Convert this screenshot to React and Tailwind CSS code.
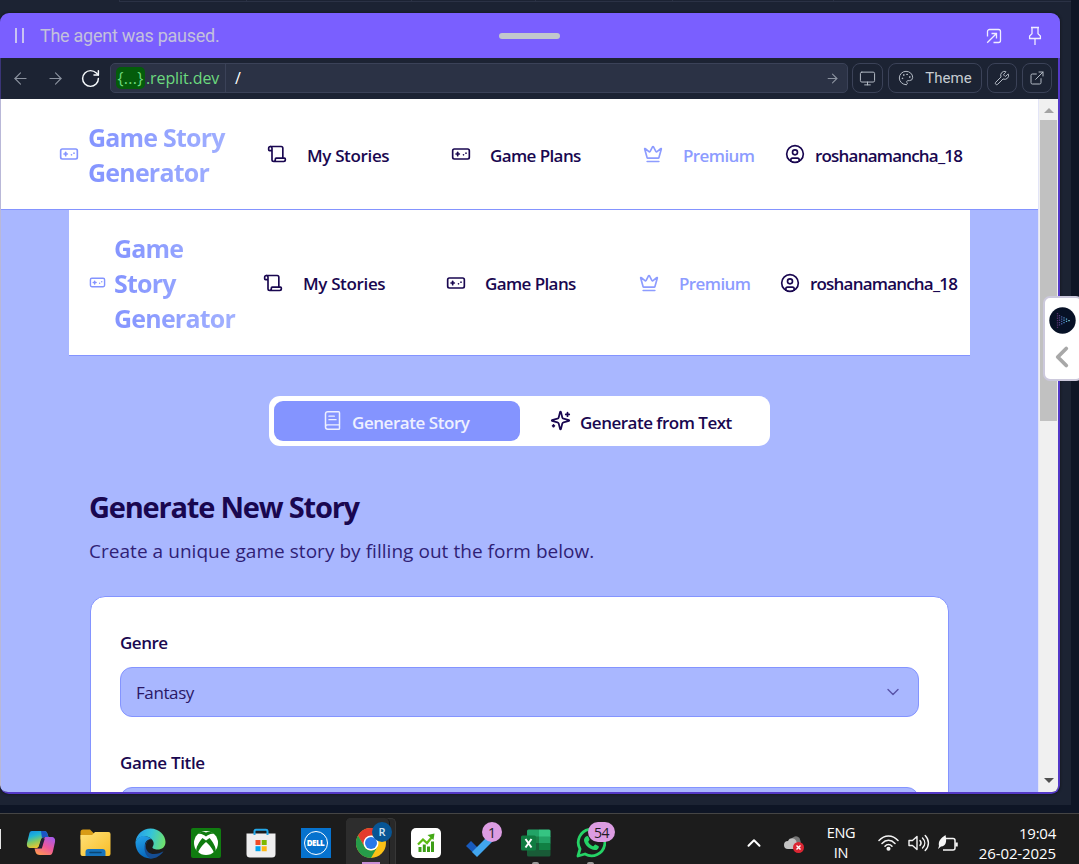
import React from "react";
import {
  ArrowLeft, ArrowRight, RotateCw, Monitor, Palette, Wrench, ExternalLink,
  Scroll, Gamepad, Crown, CircleUser, BookText, ChevronDown, ChevronUp, ChevronLeft,
} from "lucide-react";

function AgentBar() {
  return (
    <div className="flex h-[45px] shrink-0 items-center bg-[#7a5fff] font-['Roboto',sans-serif]">
      <div className="ml-[15px] flex w-[25px] gap-[5px]">
        <span className="h-[15px] w-[2px] bg-[#c9c3f2]" />
        <span className="h-[15px] w-[2px] bg-[#c9c3f2]" />
      </div>
      <span className="w-[459px] whitespace-nowrap text-[18px] tracking-[-0.27px] text-[#c3c1dc]">The agent was paused.</span>
      <span className="h-[6px] w-[61px] rounded-full bg-[#c2c8cc]" />
      <svg className="ml-[426px]" width="16" height="16" viewBox="0 0 16 16" fill="none" stroke="#f0edff" strokeWidth="1.3">
        <path d="M1.5 8.5v-5a2 2 0 0 1 2-2h9a2 2 0 0 1 2 2v9a2 2 0 0 1-2 2h-5" />
        <path d="M1.2 14.8 10.5 5.5M5.5 5.5h5v5" />
      </svg>
      <svg className="ml-[26px]" width="14" height="20" viewBox="0 0 14 20" fill="none" stroke="#f0edff" strokeWidth="1.300">
        <path d="M3 1.500h8M4 1.500v6.300L1.600 10v2.500h10.800V10L10 7.800V1.500M7 12.500V19" />
      </svg>
    </div>
  );
}

function ToolButton({ className, children }) {
  return (
    <div className={`flex h-[30px] items-center justify-center rounded-[8px] border border-[#3b4258] text-[#b4bbc5] ${className}`}>
      {children}
    </div>
  );
}

function AddressBar() {
  return (
    <div className="flex h-[41px] shrink-0 items-center border-l border-[#3a3477] bg-[#1c2333] pb-px">
      <ArrowLeft className="ml-[10px] shrink-0" size={19} strokeWidth={1.4} color="#8b929f" />
      <ArrowRight className="ml-[16px] shrink-0" size={19} strokeWidth={1.4} color="#8b929f" />
      <RotateCw className="ml-[15px] shrink-0" size={21} strokeWidth={1.7} color="#f5f9fc" />
      <div className="ml-[9px] flex h-[30px] w-[738px] shrink-0 items-center rounded-[5px] border border-[#3b4258] bg-[#2b3245] font-['Open_Sans',sans-serif] text-[16px]">
        <div className="flex h-full w-[115px] items-center border-r border-[#3b4258] pl-[5px] text-[#6cd97e]">
          <span className="flex h-[22px] w-[29px] items-center justify-center rounded-[5px] bg-[#045c0b] tracking-[0.3px]">{"{...}"}</span>
          <span className="ml-px whitespace-nowrap tracking-[-0.1px]">.replit.dev</span>
        </div>
        <span className="ml-[9px] text-white">/</span>
        <ArrowRight className="ml-auto mr-[7px]" size={15} strokeWidth={1.7} color="#8b929f" />
      </div>
      <ToolButton className="ml-[4px] w-[31px] shrink-0"><Monitor size={17} strokeWidth={1.4} /></ToolButton>
      <ToolButton className="ml-[5px] w-[94px] shrink-0 gap-[11px]">
        <Palette size={16} strokeWidth={1.5} />
        <span className="font-['Roboto',sans-serif] text-[15px] tracking-[0.05px] text-[#c6ccd2]">Theme</span>
      </ToolButton>
      <ToolButton className="ml-[5px] w-[30px] shrink-0"><Wrench size={16} strokeWidth={1.5} /></ToolButton>
      <ToolButton className="ml-[5px] w-[30px] shrink-0"><ExternalLink size={16} strokeWidth={1.5} /></ToolButton>
    </div>
  );
}

function NavItem({ icon: Icon, label, className, textClass }) {
  return (
    <div className={`flex shrink-0 items-center ${className}`}>
      <Icon className="mb-[3px] shrink-0" size={20} strokeWidth={2} />
      <span className={`whitespace-nowrap text-[17px] font-semibold ${textClass}`}>{label}</span>
    </div>
  );
}

function NavItems({ plans = "w-[192px]", premium = "w-[142px]", stories = "w-[184px]" }) {
  return (
    <>
      <NavItem icon={Scroll} label="My Stories" className={stories} textClass="ml-[20px] tracking-[-0.35px]" />
      <NavItem icon={Gamepad} label="Game Plans" className={plans} textClass="ml-[19px] tracking-[-0.6px]" />
      <NavItem icon={Crown} label="Premium" className={`text-[#8d9cff] ${premium}`} textClass="ml-[20px] tracking-[-0.6px]" />
      <NavItem icon={CircleUser} label="roshanamancha_18" className="" textClass="ml-[10px] tracking-[-0.8px]" />
    </>
  );
}

function SparklesIcon() {
  return (
    <svg className="mb-[2px]" width="21" height="21" viewBox="0 0 24 24" fill="none" stroke="currentColor" strokeWidth="2" strokeLinecap="round" strokeLinejoin="round">
      <path d="M9.937 15.500A2 2 0 0 0 8.500 14.063l-6.135-1.582a.5.5 0 0 1 0-.962L8.500 9.936A2 2 0 0 0 9.937 8.500l1.582-6.135a.5.5 0 0 1 .963 0L14.063 8.500A2 2 0 0 0 15.500 9.937l6.135 1.581a.5.5 0 0 1 0 .964L15.500 14.063a2 2 0 0 0-1.437 1.437l-1.582 6.135a.5.5 0 0 1-.963 0z" />
      <path d="M20 3v4M22 5h-4M4 17v2M5 18H3" />
    </svg>
  );
}

const brandText = "bg-gradient-to-r from-[#8494ff] to-[#a9b7ff] bg-clip-text text-[25px] font-bold leading-[35px] text-transparent tracking-[-0.8px] whitespace-nowrap";

function StoryPage() {
  return (
    <div className="flex min-w-0 flex-1 flex-col overflow-hidden bg-[#a9b7ff] font-['Open_Sans',sans-serif] text-[#190750]">
      <nav className="flex h-[111px] shrink-0 items-center border-b border-[#8494ff] bg-white pl-[58px]">
        <Gamepad className="mb-px shrink-0" size={20} color="#8494ff" />
        <div className={`ml-[9px] mt-[2px] w-[179px] ${brandText}`}>Game Story<br />Generator</div>
        <div className="mt-[3px] flex"><NavItems /></div>
      </nav>
      <div className="ml-[68px] w-[901px] shrink-0">
        <nav className="flex h-[146px] items-center border-b border-[#8494ff] bg-white pl-[20px]">
          <Gamepad className="shrink-0" size={17} color="#8494ff" />
          <div className={`ml-[8px] mt-[2px] w-[149px] ${brandText}`}>Game<br />Story<br />Generator</div>
          <div className="mt-[3px] flex"><NavItems stories="w-[183px]" plans="w-[193px]" premium="w-[141px]" /></div>
        </nav>
        <div className="ml-[200px] mt-[40px] flex h-[50px] w-[501px] rounded-[11px] bg-white p-[5px] text-[17px] font-semibold">
          <div className="flex w-[246px] items-center rounded-[9px] bg-[#8494ff] pl-[48px] text-[#eef0ff]">
            <BookText className="mb-px" size={21} strokeWidth={1.7} />
            <span className="ml-[9px] mt-[3px] whitespace-nowrap tracking-[-0.45px]">Generate Story</span>
          </div>
          <div className="flex items-center pl-[30px]">
            <SparklesIcon />
            <span className="ml-[9px] mt-[3px] whitespace-nowrap tracking-[-0.5px]">Generate from Text</span>
          </div>
        </div>
        <h1 className="ml-[20px] mt-[42px] whitespace-nowrap text-[29px] font-bold leading-[38px] tracking-[-1.200px]">Generate New Story</h1>
        <p className="ml-[20px] mt-[11px] whitespace-nowrap text-[19px] leading-[28px] tracking-[0.04px] text-[#301f76]">Create a unique game story by filling out the form below.</p>
        <div className="ml-[21px] mt-[31px] h-[400px] w-[859px] rounded-[15px] border border-[#8494ff] bg-white px-[29px] pt-[34px]">
          <div className="text-[17px] font-semibold leading-[24px] tracking-[-0.5px]">Genre</div>
          <div className="mt-[12px] flex h-[50px] items-center justify-between rounded-[12px] border border-[#8494ff] bg-[#a9b7ff] pl-[15px] pr-[15px]">
            <span className="mt-[2px] text-[17px] tracking-[-0.4px] text-[#2a1766]">Fantasy</span>
            <ChevronDown size={20} strokeWidth={1.7} color="#5a54a9" />
          </div>
          <div className="mt-[34px] text-[17px] font-semibold leading-[24px] tracking-[-0.35px]">Game Title</div>
          <div className="mt-[12px] h-[50px] rounded-[12px] border border-[#8494ff] bg-[#a9b7ff]" />
        </div>
      </div>
    </div>
  );
}

function Scrollbar() {
  return (
    <div className="flex w-[20px] shrink-0 flex-col items-center border-l border-[#e3e5f7] bg-[#f0f0f0]">
      <svg className="mt-[9px]" width="10" height="5" viewBox="0 0 10 5"><path d="M0 5 5 0l5 5z" fill="#a3a3a3" /></svg>
      <div className="mt-[7px] h-[301px] w-[17px] bg-[#c1c1c1]" />
      <svg className="mb-[9px] mt-auto" width="10" height="5" viewBox="0 0 10 5"><path d="M0 0h10L5 5z" fill="#505050" /></svg>
    </div>
  );
}

function SideTab() {
  return (
    <div className="absolute left-[1043px] top-[296px] flex h-[85px] w-[40px] flex-col items-start rounded-[7px] border-2 border-[#ccc9dc] bg-white pl-[4px] pt-[9px]">
      <svg width="27" height="27" viewBox="0 0 27 27">
        <circle cx="13.500" cy="13.500" r="13.200" fill="#071126" />
        <g strokeWidth="1.300" strokeDasharray="1.300 1" fill="none">
          <path d="M8.500 6v15" stroke="#57306b" />
          <path d="M10.500 8v11" stroke="#514085" />
          <path d="M12.700 9.200v9" stroke="#4b62a5" />
          <path d="M15 10.300v6.700" stroke="#4e8bc5" />
          <path d="M17.500 11.500v4.500" stroke="#61b8df" />
          <path d="M20 13v2" stroke="#92edf6" />
        </g>
      </svg>
      <ChevronLeft className="-ml-[4px] mt-[6px]" size={34} strokeWidth={2.700} color="#a8a8a8" />
    </div>
  );
}

function Cell({ children }) {
  return <div className="relative flex h-full w-[55px] shrink-0 items-center justify-center pt-[8px]">{children}</div>;
}

function CopilotIcon() {
  return (
    <svg width="30" height="28" viewBox="0 0 30 28">
      <defs>
        <linearGradient id="cpA" x1="0" y1="0" x2="0.400" y2="1"><stop stopColor="#1388e8" /><stop offset=".35" stopColor="#20b6d5" /><stop offset=".65" stopColor="#83ca63" /><stop offset="1" stopColor="#f2c62d" /></linearGradient>
        <linearGradient id="cpB" x1=".8" y1="0" x2=".2" y2="1"><stop stopColor="#a85be8" /><stop offset=".5" stopColor="#ed589b" /><stop offset="1" stopColor="#ff994f" /></linearGradient>
      </defs>
      <path d="M6 2h12c2 0 3 1 3.500 3l1 3h-3c-3 0-4 1-5 4l-1.500 5c-.6 1.500-1.500 2-3 2H5c-3.500 0-4.500-2-4-5L3 6c.5-2.500 1-4 3-4z" fill="url(#cpA)" />
      <path d="M24 26H14c-2.500 0-4-1-4.500-3l-1-3.500h3c2.500 0 3.500-1 4.300-4l1.500-5c.6-2 1.700-2.500 3.200-2.500H25c3.500 0 4.500 2 4 5l-2 9c-.6 2.500-1.500 4-3 4z" fill="url(#cpB)" />
      <path d="M15 2h3c2 0 3 1 3.500 3l1 3h-3c-1.500 0-2.500.5-3.500 1.500z" fill="#1a55c5" />
      <path d="M15.800 9.500h3l-3 10h-3.500z" fill="#242036" />
    </svg>
  );
}

function FolderIcon() {
  return (
    <svg width="31" height="28" viewBox="0 0 31 28">
      <defs><linearGradient id="fd" x2="1" y2="1"><stop stopColor="#ffe178" /><stop offset="1" stopColor="#f8bd27" /></linearGradient></defs>
      <path d="M.5 3A2.500 2.500 0 0 1 3 .5h7l4 4H28v6H.5z" fill="#d99c16" />
      <path d="M.5 6H12l3-3h13.500a2 2 0 0 1 2 2v20a2 2 0 0 1-2 2h-26a2 2 0 0 1-2-2z" fill="url(#fd)" />
      <path d="M5.500 27v-4a3 3 0 0 1 3-3h14a3 3 0 0 1 3 3v4z" fill="#1673bd" />
      <path d="M10 23.500h11" stroke="#0a4675" strokeWidth="1.500" strokeLinecap="round" />
    </svg>
  );
}

function EdgeIcon() {
  return (
    <svg width="31" height="31" viewBox="0 0 31 31">
      <defs>
        <linearGradient id="eg" x1="0" y1=".3" x2="1" y2=".5"><stop stopColor="#249bea" /><stop offset=".5" stopColor="#35c5d8" /><stop offset="1" stopColor="#6ee06d" /></linearGradient>
        <linearGradient id="eb" x2=".3" y2="1"><stop stopColor="#24a5eb" /><stop offset="1" stopColor="#0869bd" /></linearGradient>
      </defs>
      <path d="M.5 14C1.500 6 8 .5 15.500 .5 24 .5 30.500 7 30.500 14c0 5-3.500 7.500-8 7.500-3 0-5.500-1-5-2.500 1.500-2 1.800-5-.5-7.500C12 6 3 8 .5 14z" fill="url(#eg)" />
      <path d="M.5 14C4 6.500 12 6.500 17 11.500c-4-1-8 2.500-7 8 .8 5 4 9 9 10.500C9 32.500 0 25 .5 14z" fill="url(#eb)" />
      <path d="M14 12c-5 3-4.500 14 5 14 4 0 7-1.200 9.500-2.700C25.500 28 21 30.500 16 30.500 9 28.500 7 16 14 12z" fill="#154d92" />
    </svg>
  );
}

function XboxIcon() {
  return (
    <svg width="30" height="30" viewBox="0 0 30 30">
      <rect width="30" height="30" rx="2" fill="#107c10" />
      <circle cx="15" cy="15" r="12" fill="#fff" />
      <path d="M7 6c3-1 6 1 8 2.500 2-1.500 5-3.500 8-2.500-2-2-5-3-8-1.500C12 3 9 4 7 6z" fill="#107c10" />
      <path d="M11.500 10C8 14 4.500 20 5.500 23L7 25c1-4 5-8.500 8-11 3 2.500 7 7 8 11l1.500-2c1-3-2.500-9-6-13L15 12.500z" fill="#107c10" />
    </svg>
  );
}

function StoreIcon() {
  return (
    <svg width="30" height="30" viewBox="0 0 30 30">
      <path d="M.5 5.500h29V26a3.500 3.500 0 0 1-3.500 3.500H4A3.500 3.500 0 0 1 .5 26z" fill="#eeeeef" />
      <path d="M8.500 7V3A1.500 1.500 0 0 1 10 1.700h10A1.500 1.500 0 0 1 21.500 3v4" fill="none" stroke="#24a7e8" strokeWidth="2" />
      <path d="M9.500 12h5v5h-5z" fill="#f04b25" /><path d="M15.700 12h5v5h-5z" fill="#7db900" />
      <path d="M9.500 18.200h5v5h-5z" fill="#00a3ee" /><path d="M15.700 18.200h5v5h-5z" fill="#fdb813" />
    </svg>
  );
}

function ChromeIcon() {
  return (
    <svg width="30" height="30" viewBox="0 0 30 30">
      <circle cx="15" cy="15" r="15" fill="#fbc116" />
      <path d="M2 7.500A15 15 0 0 1 28 7.500H15L8.500 19z" fill="#e33b2e" />
      <path d="M2 7.500 8.500 18.700a7.500 7.500 0 0 0 13 0L15 30A15 15 0 0 1 2 7.500z" fill="#269b49" />
      <circle cx="15" cy="15" r="7.500" fill="#fff" /><circle cx="15" cy="15" r="6" fill="#2878e8" />
    </svg>
  );
}

function ChartIcon() {
  return (
    <svg width="30" height="30" viewBox="0 0 30 30">
      <rect width="30" height="30" rx="5" fill="#fff" />
      <path d="M7.500 19h3v5h-3zM11.800 16.500h3V24h-3zM16 18.500h3V24h-3zM20 13.500h3V24h-3z" fill="#3c9e16" />
      <path d="m7 16.500 5-5 4 3.500 5-6" fill="none" stroke="#5bbb12" strokeWidth="2.300" />
      <path d="M16.500 7 23.500 5.500 22.500 12z" fill="#43a817" />
    </svg>
  );
}

function ExcelIcon() {
  return (
    <svg width="30" height="28" viewBox="0 0 30 28">
      <path d="M6 2A1.500 1.500 0 0 1 7.500 .5H18V8H6z" fill="#22a366" /><path d="M18 .5h10A1.500 1.500 0 0 1 29.500 2v6H18z" fill="#35c482" />
      <path d="M6 7.500h12v7H6z" fill="#1b7f48" /><path d="M18 7.500h11.500v7H18z" fill="#22a366" />
      <path d="M6 14h12v7H6z" fill="#185c37" /><path d="M18 14h11.500v7H18z" fill="#108043" />
      <path d="M6 21h23.500v5a1.500 1.500 0 0 1-1.500 1.500H7.500A1.500 1.500 0 0 1 6 26z" fill="#195b37" />
      <rect y="6.500" width="15" height="15" rx="1.500" fill="#107c41" />
      <path d="m4.500 10 6 8.500M10.500 10l-6 8.500" stroke="#fff" strokeWidth="2" />
    </svg>
  );
}

function WhatsAppIcon() {
  return (
    <svg width="30" height="30" viewBox="0 0 30 30" fill="none">
      <path d="M2 28 4 21A13.300 13.300 0 1 1 9 26z" stroke="#25d366" strokeWidth="2.800" strokeLinejoin="round" />
      <path d="M10 8.500c1-1 2-.7 2.500.5l1 2.500c.2.800-1.500 2-1.200 2.500 1 2 2.700 3.500 4.700 4.300.8.200 1.800-2 2.500-1.700l2.800 1.400c1 .6.600 1.900-.4 2.900-1.500 1.500-4 1.600-6.900.1-3.500-1.800-6.500-5-7-8.500-.1-1.800.8-3 2-4z" fill="#25d366" />
    </svg>
  );
}

function Taskbar() {
  return (
    <div className="flex h-[51px] w-[1079px] shrink-0 border-t border-[#454545] bg-[#1c1c1c] font-['Open_Sans',sans-serif] text-white">
      <div className="mt-[15px] h-[20px] w-px bg-[#e5e5e5]" />
      <div className="ml-[12px] flex h-full">
        <Cell><CopilotIcon /></Cell>
        <Cell><FolderIcon /></Cell>
        <Cell><EdgeIcon /></Cell>
        <Cell><XboxIcon /></Cell>
        <Cell><StoreIcon /></Cell>
        <Cell>
          <div className="flex h-[30px] w-[30px] items-center justify-center bg-[#0672ce]">
            <span className="flex h-[24px] w-[24px] items-center justify-center rounded-full border border-white text-[8px] font-extrabold tracking-[-0.5px]">DELL</span>
          </div>
        </Cell>
        <Cell>
          <span className="absolute left-[3px] top-[4px] h-[46px] w-[50px] rounded-t-[5px] border border-b-0 border-[#373737] bg-[#292929]" />
          <span className="absolute left-[3px] top-[4px] h-[46px] w-[44px] rounded-t-[5px] border-r border-[#171717] bg-[#2d2d2d]" />
          <span className="relative"><ChromeIcon /></span>
          <span className="absolute left-[29px] top-[8px] flex h-[20px] w-[20px] items-center justify-center rounded-full bg-[#075595] text-[11px] font-semibold text-[#d5e6f3]">R</span>
          <span className="absolute bottom-0 left-[19px] h-[2px] w-[18px] bg-[#c88ed6]" />
        </Cell>
        <Cell><ChartIcon /></Cell>
        <Cell>
          <svg width="31" height="26" viewBox="0 0 31 26" className="mt-[3px]">
            <path d="M1 14 6 9l9 9-4.500 5z" fill="#185abd" /><path d="m12 25-5-5L26 1l5 5z" fill="#41a5ee" />
          </svg>
          <span className="absolute left-[29px] top-[8px] flex h-[20px] w-[20px] items-center justify-center rounded-full bg-[#dc9ce2] text-[14px] text-[#211b24]">1</span>
        </Cell>
        <Cell><ExcelIcon /><span className="absolute bottom-0 h-[2px] w-[7px] rounded-t bg-[#999]" /></Cell>
        <Cell>
          <WhatsAppIcon />
          <span className="absolute left-[25px] top-[8px] flex h-[20px] w-[27px] items-center justify-center rounded-full bg-[#dc9ce2] text-[14px] tracking-[-0.5px] text-[#211b24]">54</span>
          <span className="absolute bottom-0 h-[2px] w-[7px] rounded-t bg-[#999]" />
        </Cell>
      </div>
      <div className="ml-auto flex items-center pr-[23px] pt-[7px]">
        <ChevronUp size={22} strokeWidth={2.200} />
        <svg className="ml-[19px] mt-[3px]" width="21" height="18" viewBox="0 0 21 18">
          <path d="M7 5a5 5 0 0 1 8.500-2l1 3 1 7H5z" fill="#777" />
          <path d="M4 14a4 4 0 0 1 0-8c2-4 6-3 8-.5l3 8.500z" fill="#c3c3c3" />
          <circle cx="14.500" cy="12.500" r="5.500" fill="#db2633" /><path d="m12.500 10.500 4 4m0-4-4 4" stroke="#fff" strokeWidth="1.400" />
        </svg>
        <div className="ml-[20px] flex w-[32px] flex-col items-center text-[14.500px] leading-[20px] tracking-[-0.3px]">
          <span>ENG</span><span>IN</span>
        </div>
        <svg className="ml-[21px]" width="21" height="17" viewBox="0 0 21 17" fill="none" stroke="#f5f5f5" strokeWidth="1.500" strokeLinecap="round">
          <path d="M1 6.500c5.500-6 13.500-6 19 0M4 9.500c4-4.200 9-4.200 13 0M7 12.300c2-2.300 5-2.300 7 0" /><circle cx="10.500" cy="14.700" r="1.300" fill="#f5f5f5" />
        </svg>
        <svg className="ml-[9px]" width="22" height="18" viewBox="0 0 22 18" fill="none" stroke="#f5f5f5" strokeWidth="1.400" strokeLinecap="round" strokeLinejoin="round">
          <path d="M1 6.500h3.500L9 2.500v13l-4.500-4H1zM12 6.500c1.300 1.500 1.300 3.500 0 5M14.500 4c3 3 3 7 0 10M17.200 1.500c4.300 4.500 4.300 10.500 0 15" />
        </svg>
        <svg className="ml-[8px]" width="21" height="18" viewBox="0 0 21 18" fill="none" stroke="#f5f5f5" strokeWidth="1.500">
          <path d="M8 4.500h7a2 2 0 0 1 2 2V14a2 2 0 0 1-2 2H5" /><path d="M18.500 8.500v4" strokeWidth="2.500" />
          <path d="M7.500 1C3 4 0 7 1 12l-1 3 3-2.500c5 0 6-5 4.500-11.500z" fill="#f5f5f5" stroke="none" />
        </svg>
        <div className="ml-[17px] flex w-[80px] flex-col items-end whitespace-nowrap text-[15px] leading-[20px] tracking-[-0.1px]">
          <span className="tracking-[-0.25px]">19:04</span><span>26-02-2025</span>
        </div>
      </div>
    </div>
  );
}

export default function App() {
  return (
    <div className="relative flex h-[864px] w-[1079px] flex-col overflow-hidden bg-[#0e1525]">
      <div className="mb-[8px] h-[805px] w-[1071px] bg-[#1c2333]">
        <div className="ml-[119px] flex h-[2px] border-b border-l border-[#2b3245]">
          <span className="w-[127px] border-r border-[#2b3245]" />
          <span className="w-[165px] border-r border-[#2b3245]" />
          <span className="w-[124px] border-r border-[#2b3245]" />
          <span className="w-[137px] border-r border-[#2b3245]" />
          <span className="w-[161px] border-r border-[#2b3245]" />
        </div>
        <div className="mt-[11px] flex h-[781px] w-[1060px] flex-col overflow-hidden rounded-[9px] shadow-[0_0_3px_#111]">
          <AgentBar />
          <div className="flex min-h-0 flex-1 flex-col overflow-hidden rounded-b-[8px] border-b-2 border-r-2 border-[#5439c8]">
            <AddressBar />
            <div className="flex min-h-0 flex-1 border-l border-[#b9b8d8]">
              <StoryPage />
              <Scrollbar />
            </div>
          </div>
        </div>
      </div>
      <Taskbar />
      <SideTab />
    </div>
  );
}
